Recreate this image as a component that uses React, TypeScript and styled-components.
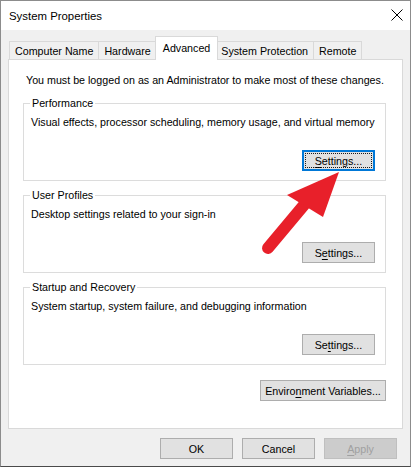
import React from 'react'
import styled, { createGlobalStyle } from 'styled-components'

const GlobalStyle = createGlobalStyle`
  html, body {
    margin: 0;
    padding: 0;
    background: #ffffff;
  }
  body {
    font-family: 'Liberation Sans', Arial, sans-serif;
    font-size: 10.7px;
    color: #000000;
  }
`

const Window = styled.div`
  position: relative;
  box-sizing: border-box;
  width: 411px;
  height: 467px;
  display: flex;
  flex-direction: column;
  border: 1px solid #8c8c8c;
  border-bottom-color: #4a4a4a;
  background: #f0f0f0;
`

const TitleBar = styled.div`
  height: 29px;
  flex-shrink: 0;
  display: flex;
  align-items: center;
  justify-content: space-between;
  padding: 0 9px 0 8px;
  background: #ffffff;
  font-size: 11.4px;
`

const CloseButton = styled.svg`
  width: 12px;
  height: 12px;
  margin-right: -2px;
  margin-top: -1px;
`

const Body = styled.div`
  flex: 1;
  display: flex;
  flex-direction: column;
  padding: 7px 7px 0 7px;
`

const TabStrip = styled.div`
  display: flex;
  align-items: flex-end;
  height: 22px;
  padding-left: 1px;
  position: relative;
  z-index: 1;
`

const Tab = styled.div<{ $active?: boolean }>`
  box-sizing: border-box;
  display: flex;
  align-items: center;
  height: ${({ $active }) => ($active ? '24px' : '18px')};
  margin: ${({ $active }) => ($active ? '0 -2px -1px -2px' : '0 0 0 -1px')};
  padding: ${({ $active }) => ($active ? '0 7px 2px 7px' : '0 5px')};
  border: 1px solid #d9d9d9;
  border-bottom: none;
  background: ${({ $active }) => ($active ? '#ffffff' : '#f0f0f0')};
  position: relative;
  z-index: ${({ $active }) => ($active ? 2 : 1)};
  white-space: nowrap;

  &:first-child {
    margin-left: 0;
  }
`

const Panel = styled.div`
  box-sizing: border-box;
  width: 395px;
  height: 370px;
  border: 1px solid #d9d9d9;
  background: #ffffff;
  display: flex;
  flex-direction: column;
  padding: 13px 16px 0 14px;
`

const Intro = styled.div`
  line-height: 14px;
  margin: 0 0 16px 3px;
  white-space: nowrap;
`

const GroupBox = styled.div`
  position: relative;
  box-sizing: border-box;
  height: 78px;
  border: 1px solid #dcdcdc;
  padding: 11px 10px 0 7px;
  display: flex;
  flex-direction: column;
  margin-bottom: 14px;
`

const GroupTitle = styled.span`
  position: absolute;
  top: -8px;
  left: 6px;
  padding: 0 2px;
  line-height: 14px;
  background: #ffffff;
`

const GroupText = styled.div`
  line-height: 14px;
  white-space: nowrap;
`

const ButtonRow = styled.div<{ $top?: number }>`
  display: flex;
  justify-content: flex-end;
  gap: 9px;
  margin-top: ${({ $top }) => $top ?? 0}px;
`

const Button = styled.button<{ $width?: number; $focused?: boolean }>`
  position: relative;
  box-sizing: border-box;
  width: ${({ $width }) => $width ?? 73}px;
  height: 21px;
  padding: 0;
  font-family: inherit;
  font-size: 10.7px;
  white-space: nowrap;
  color: #000000;
  background: #e1e1e1;
  border: 1px solid ${({ $focused }) => ($focused ? '#0078d7' : '#adadad')};
  box-shadow: ${({ $focused }) => ($focused ? 'inset 0 0 0 1px #0078d7' : 'none')};
  border-radius: 0;

  &::after {
    content: '';
    display: ${({ $focused }) => ($focused ? 'block' : 'none')};
    position: absolute;
    inset: 2px;
    border: 1px dotted #1a1a1a;
  }

  &:disabled {
    color: #a0a0a0;
    background: #cccccc;
    border-color: #bfbfbf;
  }

  u {
    text-decoration-thickness: 1px;
    text-underline-offset: 2px;
  }
`

const Footer = styled.div`
  flex: 1;
  display: flex;
  justify-content: flex-end;
  align-items: flex-start;
  gap: 9px;
  padding: 9px 6px 0 0;
`

const ArrowOverlay = styled.svg`
  position: absolute;
  left: -1px;
  top: -1px;
  width: 412px;
  height: 468px;
  pointer-events: none;
`

const groups = [
  {
    title: 'Performance',
    text: 'Visual effects, processor scheduling, memory usage, and virtual memory',
    pre: '',
    key: 'S',
    post: 'ettings...',
    focused: true,
  },
  {
    title: 'User Profiles',
    text: 'Desktop settings related to your sign-in',
    pre: 'S',
    key: 'e',
    post: 'ttings...',
  },
  {
    title: 'Startup and Recovery',
    text: 'System startup, system failure, and debugging information',
    pre: 'Se',
    key: 't',
    post: 'tings...',
  },
]

const tabs = ['Computer Name', 'Hardware', 'Advanced', 'System Protection', 'Remote']

export default function App() {
  return (
    <>
      <GlobalStyle />
      <Window>
        <TitleBar>
          <span>System Properties</span>
          <CloseButton viewBox="0 0 12 12">
            <path d="M0.5 0.5 L11.5 11.5 M11.5 0.5 L0.5 11.5" stroke="#000" strokeWidth="1" fill="none" />
          </CloseButton>
        </TitleBar>
        <Body>
          <TabStrip>
            {tabs.map((t) => (
              <Tab key={t} $active={t === 'Advanced'}>
                {t}
              </Tab>
            ))}
          </TabStrip>
          <Panel>
            <Intro>You must be logged on as an Administrator to make most of these changes.</Intro>
            {groups.map((g) => (
              <GroupBox key={g.title}>
                <GroupTitle>{g.title}</GroupTitle>
                <GroupText>{g.text}</GroupText>
                <ButtonRow $top={21}>
                  <Button $focused={g.focused}>
                    {g.pre}
                    <u>{g.key}</u>
                    {g.post}
                  </Button>
                </ButtonRow>
              </GroupBox>
            ))}
            <ButtonRow $top={1}>
              <Button $width={126}>
                Enviro<u>n</u>ment Variables...
              </Button>
            </ButtonRow>
          </Panel>
          <Footer>
            <Button>OK</Button>
            <Button>Cancel</Button>
            <Button disabled>
              <u>A</u>pply
            </Button>
          </Footer>
        </Body>
        <ArrowOverlay viewBox="0 0 412 468">
          <line x1="268" y1="248" x2="304" y2="205" stroke="#e8202a" strokeWidth="12" strokeLinecap="round" />
          <polygon points="339,172 287,195 323,217" fill="#e8202a" />
        </ArrowOverlay>
      </Window>
    </>
  )
}
